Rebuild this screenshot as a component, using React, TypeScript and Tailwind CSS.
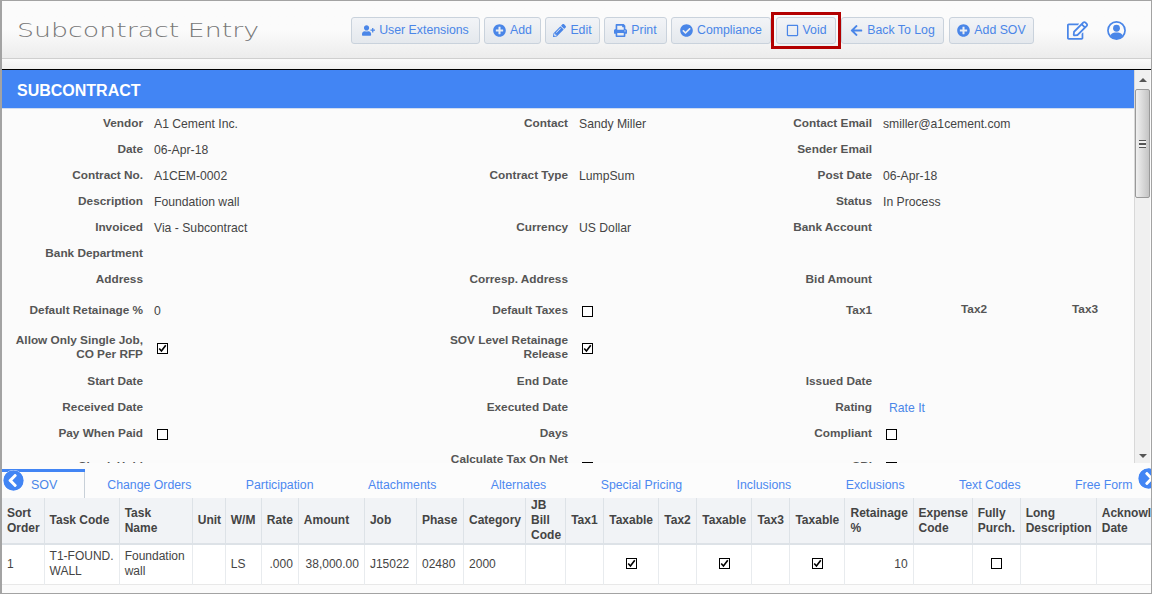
import type { ReactNode } from 'react';
import {
  FaArrowLeft,
  FaCheckCircle,
  FaChevronCircleLeft,
  FaChevronCircleRight,
  FaPencilAlt,
  FaPlusCircle,
  FaPrint,
  FaRegEdit,
  FaRegSquare,
  FaUserPlus,
} from 'react-icons/fa';

const font = { fontFamily: '"Liberation Sans", Arial, sans-serif' };

function Btn({ icon, label, w, boxed }: { icon: ReactNode; label: string; w: string; boxed?: boolean }) {
  return (
    <button
      className={`${w} relative h-[27px] shrink-0 flex items-center justify-center gap-[4px] rounded-[3px] border border-[#c9d2dc] bg-gradient-to-b from-[#f2f4f7] to-[#e4e8ed] text-[12.3px] text-[#4a86e8]`}
    >
      <span className="text-[13px]">{icon}</span>
      {label}
      {boxed && <span className="absolute -inset-[6px] border-[3px] border-[#b30000]" />}
    </button>
  );
}

function Check({ on, form }: { on?: boolean; form?: boolean }) {
  return (
    <span
      className={`inline-flex w-[11px] h-[11px] items-center justify-center border border-black bg-white align-middle ${
        form ? 'ml-[3px]' : ''
      }`}
    >
      {on && (
        <svg viewBox="0 0 11 11" className="w-[9px] h-[9px]">
          <path d="M1.5 5.5 L4.2 8.5 L9.5 1.5" fill="none" stroke="#000" strokeWidth="2" />
        </svg>
      )}
    </span>
  );
}

function Label({ children }: { children?: ReactNode }) {
  return <div className="text-right text-[11.8px] font-bold text-[#555] leading-[14px]">{children}</div>;
}

function Value({ children }: { children?: ReactNode }) {
  return <div className="pl-[11px] pt-[1px] text-[12.2px] text-[#444] leading-[14px] whitespace-nowrap">{children}</div>;
}

function Row({ cells, h = 'h-[26px]' }: { cells: ReactNode[]; h?: string }) {
  return (
    <div className={`grid grid-cols-[141px_271px_154px_150px_154px_1fr] items-center ${h}`}>
      <Label>{cells[0]}</Label>
      <Value>{cells[1]}</Value>
      <Label>{cells[2]}</Label>
      <Value>{cells[3]}</Value>
      <Label>{cells[4]}</Label>
      <Value>{cells[5]}</Value>
    </div>
  );
}

const tabs = [
  'Change Orders',
  'Participation',
  'Attachments',
  'Alternates',
  'Special Pricing',
  'Inclusions',
  'Exclusions',
  'Text Codes',
  'Free Form',
];

const cols = [42, 75, 73, 33, 36, 37, 66, 52, 47, 62, 40, 38, 55, 38, 55, 38, 55, 68, 59, 48, 76, 70];

const heads = [
  ['Sort', 'Order'],
  ['Task Code'],
  ['Task', 'Name'],
  ['Unit'],
  ['W/M'],
  ['Rate'],
  ['Amount'],
  ['Job'],
  ['Phase'],
  ['Category'],
  ['JB', 'Bill', 'Code'],
  ['Tax1'],
  ['Taxable'],
  ['Tax2'],
  ['Taxable'],
  ['Tax3'],
  ['Taxable'],
  ['Retainage', '%'],
  ['Expense', 'Code'],
  ['Fully', 'Purch.'],
  ['Long', 'Description'],
  ['Acknowl', 'Date'],
];

const body: { v: ReactNode; c?: string }[] = [
  { v: '1' },
  { v: <>T1-FOUND.<br />WALL</> },
  { v: <>Foundation<br />wall</> },
  { v: '' },
  { v: 'LS' },
  { v: '.000', c: 'text-right' },
  { v: '38,000.00', c: 'text-right' },
  { v: 'J15022' },
  { v: '02480' },
  { v: '2000' },
  { v: '' },
  { v: '' },
  { v: <Check on />, c: 'text-center pb-[3px]' },
  { v: '' },
  { v: <Check on />, c: 'text-center pb-[3px]' },
  { v: '' },
  { v: <Check on />, c: 'text-center pb-[3px]' },
  { v: '10', c: 'text-right' },
  { v: '' },
  { v: <Check />, c: 'text-center pb-[3px]' },
  { v: '' },
  { v: '' },
];

export default function App() {
  return (
    <div style={font} className="w-[1152px] h-[594px] flex flex-col overflow-hidden border border-[#a3a3a3] border-l-2 bg-[#fbfbfb] text-[12px]">
      {/* header */}
      <div className="h-[58px] shrink-0 pt-[1px] flex items-center bg-gradient-to-b from-[#fbfbfb] via-[#fbfbfb] to-[#ececec] border-b border-[#cfcfcf]">
        <div className="w-[349px] pl-[15px]">
          <div
            style={{ fontFamily: '"DejaVu Sans", sans-serif' }}
            className="origin-left scale-x-[1.34] text-[20px] font-extralight text-[#777] whitespace-nowrap"
          >
            Subcontract Entry
          </div>
        </div>
        <div className="flex gap-[4px]">
          <Btn w="w-[129px]" icon={<FaUserPlus />} label="User Extensions" />
          <Btn w="w-[57px]" icon={<FaPlusCircle />} label="Add" />
          <Btn w="w-[55px]" icon={<FaPencilAlt />} label="Edit" />
          <Btn w="w-[63px]" icon={<FaPrint />} label="Print" />
          <Btn w="w-[100px]" icon={<FaCheckCircle />} label="Compliance" />
          <Btn w="w-[60px] ml-[1px]" boxed icon={<FaRegSquare />} label="Void" />
          <Btn w="w-[103px] ml-[1px]" icon={<FaArrowLeft />} label="Back To Log" />
          <Btn w="w-[85px] ml-[1px]" icon={<FaPlusCircle />} label="Add SOV" />
        </div>
        <FaRegEdit className="ml-[33px] text-[#4a86e8] text-[21px]" />
        <svg viewBox="0 0 20 20" className="ml-[19px] w-[19px] h-[19px] text-[#4a86e8]">
          <circle cx="10" cy="10" r="9" fill="none" stroke="currentColor" strokeWidth="1.8" />
          <circle cx="10" cy="7.6" r="3.6" fill="currentColor" />
          <path d="M3.5 15.5 C4.5 12.5 7.5 12 10 12 C12.5 12 15.5 12.5 16.5 15.5 C14.5 18 12 19 10 19 C8 19 5.5 18 3.5 15.5Z" fill="currentColor" />
        </svg>
      </div>
      <div className="h-[11px] shrink-0 bg-gradient-to-b from-[#fafafa] to-[#f0f0f0] border-b border-black" />

      {/* form + scrollbar */}
      <div className="h-[393px] shrink-0 flex overflow-hidden">
        <div className="flex-1 min-w-0 overflow-hidden">
          <div className="h-[39px] bg-[#4285f4] flex items-center pl-[15px] pt-[4px] text-[16px] font-bold text-white border-b border-[#d0dcf0]">
            SUBCONTRACT
          </div>
          <div className="pt-[1px]">
            <Row cells={['Vendor', 'A1 Cement Inc.', 'Contact', 'Sandy Miller', 'Contact Email', 'smiller@a1cement.com']} />
            <Row cells={['Date', '06-Apr-18', '', '', 'Sender Email', '']} />
            <Row cells={['Contract No.', 'A1CEM-0002', 'Contract Type', 'LumpSum', 'Post Date', '06-Apr-18']} />
            <Row cells={['Description', 'Foundation wall', '', '', 'Status', 'In Process']} />
            <Row cells={['Invoiced', 'Via - Subcontract', 'Currency', 'US Dollar', 'Bank Account', '']} />
            <Row cells={['Bank Department', '', '', '', '', '']} />
            <Row cells={['Address', '', 'Corresp. Address', '', 'Bid Amount', '']} />
            <div className="grid grid-cols-[141px_271px_154px_150px_154px_1fr] items-center h-[36px]">
              <Label>Default Retainage %</Label>
              <Value>0</Value>
              <Label>Default Taxes</Label>
              <Value><Check form /></Value>
              <Label>Tax1</Label>
              <div className="flex text-[11.8px] font-bold text-[#555]">
                <span className="w-[115px] text-right">Tax2</span>
                <span className="w-[111px] text-right">Tax3</span>
              </div>
            </div>
            <div className="mt-[4px]">
              <Row h="h-[30px]" cells={[<>Allow Only Single Job,<br />CO Per RFP</>, <Check form on />, <>SOV Level Retainage<br />Release</>, <Check form on />, '', '']} />
            </div>
            <div className="h-[6px]" />
            <Row cells={['Start Date', '', 'End Date', '', 'Issued Date', '']} />
            <Row cells={['Received Date', '', 'Executed Date', '', 'Rating', <span className="pl-[6px] text-[#4a86e8]">Rate It</span>]} />
            <Row cells={['Pay When Paid', <Check form />, 'Days', '', 'Compliant', <Check form />]} />
            <Row h="h-[40px]" cells={['Check Hold', '', <>Calculate Tax On Net<br />&nbsp;</>, <Check form />, 'SBI', <Check form />]} />
          </div>
        </div>
        {/* scrollbar */}
        <div className="w-[16px] mr-[1px] shrink-0 flex flex-col bg-[#f0f0f0] border-l border-[#d8d8d8]">
          <div className="h-[19px] flex items-center justify-center">
            <span className="w-0 h-0 border-x-[4px] border-x-transparent border-b-[4px] border-b-[#555]" />
          </div>
          <div className="h-[109px] flex items-center justify-center rounded-[2px] border border-[#999] bg-gradient-to-r from-[#f0f0f0] to-[#c4c4c4]">
            <span className="w-[7px] h-[8px] border-y border-[#555] bg-[linear-gradient(#f0f0f0_33%,#555_33%,#555_66%,#f0f0f0_66%)]" />
          </div>
          <div className="flex-1" />
          <div className="h-[15px] flex items-center justify-center">
            <span className="w-0 h-0 border-x-[4px] border-x-transparent border-t-[4px] border-t-[#555]" />
          </div>
        </div>
      </div>

      {/* tabs */}
      <div className="relative h-[35px] shrink-0 flex items-end overflow-hidden bg-[#fcfcfc]">
        <div className="absolute left-0 top-[6px] z-10 w-[83px] h-[3px] bg-[#4285f4]" />
        <FaChevronCircleLeft className="absolute left-[1px] top-[7px] z-20 text-[21px] text-[#4285f4] bg-white rounded-full" />
        <FaChevronCircleRight className="absolute right-[-8px] top-[5px] z-20 text-[21px] text-[#4285f4] bg-white rounded-full" />
        <div className="h-[29px] pt-[7px] pl-[29px] text-[12.5px] text-[#4a86e8] border-r border-[#c8d0d8] w-[83px] shrink-0">SOV</div>
        <div className="flex h-[29px] -ml-[5px]">
          {tabs.map((t) => (
            <div key={t} className="px-[27.25px] pt-[7px] text-[12.3px] whitespace-nowrap text-[#4d88f0]">
              {t}
            </div>
          ))}
        </div>
      </div>

      {/* table */}
      <div className="flex-1 overflow-hidden">
        <table className="table-fixed border-collapse w-[1165px]">
          <colgroup>
            {cols.map((w, i) => (
              <col key={i} span={1} width={w} />
            ))}
          </colgroup>
          <thead>
            <tr className="h-[45px] bg-[#f1f3f6] border-b-2 border-[#dde2e7]">
              {heads.map((h, i) => (
                <th key={i} className="px-[5px] text-left font-bold text-[#444] leading-[15px] border-r border-[#dde2e7] whitespace-nowrap">
                  {h.map((l) => (
                    <div key={l}>{l}</div>
                  ))}
                </th>
              ))}
            </tr>
          </thead>
          <tbody>
            <tr className="h-[40px] bg-white border-b border-[#e8e8e8]">
              {body.map((c, i) => (
                <td key={i} className={`px-[5px] text-[#444] leading-[15px] border-r border-[#e8ebee] ${c.c ?? ''}`}>
                  {c.v}
                </td>
              ))}
            </tr>
          </tbody>
        </table>
      </div>
    </div>
  );
}
